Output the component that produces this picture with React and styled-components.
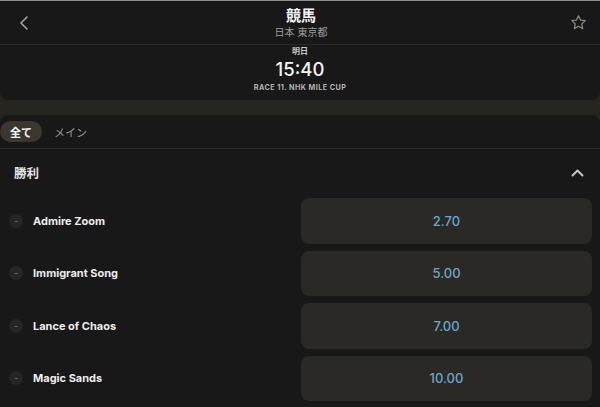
import React from 'react';
import styled, { createGlobalStyle } from 'styled-components';

const GlobalStyle = createGlobalStyle`
  html, body {
    margin: 0;
    padding: 0;
    background: #27251f;
    font-family: Inter, "Noto Sans CJK JP", "Noto Sans", sans-serif;
    -webkit-font-smoothing: antialiased;
  }
`;

const runners = [
  { name: 'Admire Zoom', odds: '2.70' },
  { name: 'Immigrant Song', odds: '5.00' },
  { name: 'Lance of Chaos', odds: '7.00' },
  { name: 'Magic Sands', odds: '10.00' },
];

const App = () => (
  <>
    <GlobalStyle />
    <Page>
      <HeaderCard>
        <TopBar>
          <IconButton aria-label="back">
            <svg width="10" height="14" viewBox="0 0 10 14" fill="none">
              <path d="M8 1L2 7l6 6" stroke="#a8a8a8" strokeWidth="1.5" strokeLinecap="round" strokeLinejoin="round" />
            </svg>
          </IconButton>
          <TitleBlock>
            <Title>競馬</Title>
            <Subtitle>日本 東京都</Subtitle>
          </TitleBlock>
          <IconButton aria-label="favourite">
            <svg width="17" height="17" viewBox="0 0 24 24" fill="none">
              <path
                d="M12 2.5l2.9 6.1 6.6.8-4.9 4.6 1.3 6.6L12 17.3l-5.9 3.3 1.3-6.6-4.9-4.6 6.6-.8z"
                stroke="#8c867b"
                strokeWidth="1.8"
                strokeLinejoin="round"
              />
            </svg>
          </IconButton>
        </TopBar>
        <RaceInfo>
          <Day>明日</Day>
          <Time>15:40</Time>
          <RaceName>RACE 11. NHK MILE CUP</RaceName>
        </RaceInfo>
      </HeaderCard>

      <Panel>
        <Tabs>
          <Tab $active>全て</Tab>
          <Tab>メイン</Tab>
        </Tabs>
        <SectionHeader>
          <SectionTitle>勝利</SectionTitle>
          <svg width="13" height="9" viewBox="0 0 13 9" fill="none">
            <path d="M1.5 7.5l5-5 5 5" stroke="#c4c4c4" strokeWidth="2" strokeLinecap="round" strokeLinejoin="round" />
          </svg>
        </SectionHeader>
        <RunnerList>
          {runners.map((r) => (
            <RunnerRow key={r.name}>
              <RunnerLabel>
                <Silk>-</Silk>
                <RunnerName>{r.name}</RunnerName>
              </RunnerLabel>
              <OddsButton>{r.odds}</OddsButton>
            </RunnerRow>
          ))}
        </RunnerList>
      </Panel>
    </Page>
  </>
);

const Page = styled.div`
  display: flex;
  flex-direction: column;
  height: 407px;
  overflow: hidden;
`;

const HeaderCard = styled.header`
  background: #181818;
  border-top: 1px solid #8e8e8e;
  border-radius: 0 0 8px 8px;
  height: 100px;
  box-sizing: border-box;
`;

const TopBar = styled.div`
  display: flex;
  align-items: center;
  justify-content: space-between;
  height: 43px;
  padding: 0 12px 0 14px;
  border-bottom: 1px solid #2b2b2b;
`;

const IconButton = styled.div`
  display: flex;
  align-items: center;
  justify-content: center;
  width: 20px;
  height: 20px;
`;

const TitleBlock = styled.div`
  display: flex;
  flex-direction: column;
  align-items: center;
  gap: 2px;
  margin-top: 1px;
`;

const Title = styled.div`
  color: #f2f2f2;
  font-size: 15px;
  font-weight: 700;
  line-height: 16px;
`;

const Subtitle = styled.div`
  color: #9c9c9c;
  font-size: 10px;
  line-height: 12px;
`;

const RaceInfo = styled.div`
  display: flex;
  flex-direction: column;
  align-items: center;
  padding-top: 1px;
`;

const Day = styled.div`
  color: #c8c8c8;
  font-size: 8px;
  font-weight: 600;
  line-height: 10px;
`;

const Time = styled.div`
  color: #f4f4f4;
  font-size: 18.5px;
  font-weight: 500;
  line-height: 22px;
  margin-top: 2px;
`;

const RaceName = styled.div`
  color: #b4b4b4;
  font-size: 7.2px;
  font-weight: 700;
  letter-spacing: 0.45px;
  line-height: 10px;
  margin-top: 3px;
`;

const Panel = styled.main`
  flex: 1;
  margin-top: 15px;
  background: #181818;
  border-radius: 8px 8px 0 0;
`;

const Tabs = styled.nav`
  display: flex;
  align-items: flex-start;
  gap: 2px;
  height: 34px;
  padding-top: 6px;
  box-sizing: border-box;
  border-bottom: 1px solid #2b2b2b;
`;

const Tab = styled.div`
  display: flex;
  align-items: center;
  height: 21px;
  padding: 0 10px;
  border-radius: 11px;
  font-size: 11px;
  font-weight: ${(p) => (p.$active ? 700 : 400)};
  color: ${(p) => (p.$active ? '#f4f4f4' : '#9a9a9a')};
  background: ${(p) => (p.$active ? '#3a3731' : 'transparent')};
`;

const SectionHeader = styled.div`
  display: flex;
  align-items: center;
  justify-content: space-between;
  height: 46px;
  padding: 0 16px 0 14px;
`;

const SectionTitle = styled.h2`
  margin: 0;
  color: #e6e6e6;
  font-size: 12.5px;
  font-weight: 700;
`;

const RunnerList = styled.div`
  display: flex;
  flex-direction: column;
  gap: 7px;
  padding: 3px 8px 0 9px;
`;

const RunnerRow = styled.div`
  display: grid;
  grid-template-columns: 292px 1fr;
  align-items: center;
  height: 45.5px;
`;

const RunnerLabel = styled.div`
  display: flex;
  align-items: center;
  gap: 10px;
`;

const Silk = styled.span`
  display: flex;
  align-items: center;
  justify-content: center;
  width: 14px;
  height: 14px;
  border-radius: 50%;
  background: #262626;
  color: #8a8a8a;
  font-size: 8px;
  line-height: 1;
`;

const RunnerName = styled.span`
  color: #ededed;
  font-size: 11px;
  font-weight: 700;
`;

const OddsButton = styled.button`
  height: 100%;
  border: none;
  border-radius: 8px;
  background: #2a2925;
  color: #6aa7cb;
  font-family: inherit;
  font-size: 13px;
  font-weight: 500;
  cursor: pointer;
`;

export default App;
